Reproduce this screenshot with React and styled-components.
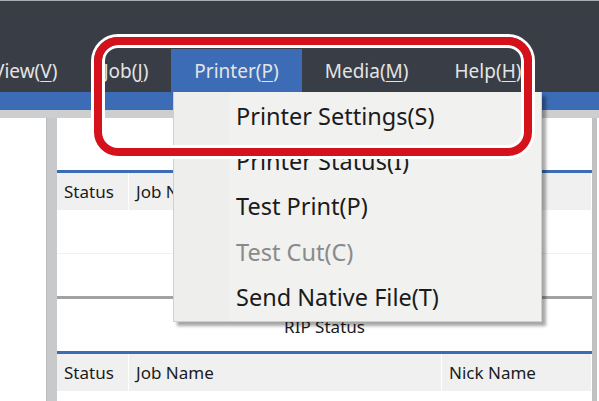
import React from "react";
import styled, { createGlobalStyle } from "styled-components";

const colors = {
  dark: "#393d45",
  blue: "#3b6cb5",
  red: "#d5111b",
  band: "#cdcecf",
  splitter: "#c7c9cb",
  menu: "#f1f1f0",
  gutter: "#eeeeed",
  header: "#f0f0f0",
  text: "#1b1b1b",
  disabled: "#8a8a8a",
};

const menus = [
  { label: "View", key: "V" },
  { label: "Job", key: "J" },
  { label: "Printer", key: "P", open: true },
  { label: "Media", key: "M" },
  { label: "Help", key: "H" },
];

const printerItems = [
  { label: "Printer Settings", key: "S" },
  { label: "Printer Status", key: "I" },
  { label: "Test Print", key: "P" },
  { label: "Test Cut", key: "C", disabled: true },
  { label: "Send Native File", key: "T" },
];

const GlobalStyle = createGlobalStyle`
  html, body {
    margin: 0;
    padding: 0;
    background: #ffffff;
  }
  body {
    font-family: "Noto Sans", "Open Sans", sans-serif;
  }
`;

const App = () => {
  return (
    <>
      <GlobalStyle />
      <Screen>
        <TitleArea />
        <MenuBar>
          {menus.map((m) => (
            <MenuItem key={m.label} open={m.open}>
              {m.label}(<u>{m.key}</u>)
            </MenuItem>
          ))}
        </MenuBar>
        <BlueStrip />
        <Workspace>
          <LeftPane />
          <Splitter />
          <MainPane>
            <PaneTitle>Job Status</PaneTitle>
            <BlueRule />
            <HeaderRow>
              <HeaderCell width="72px">Status</HeaderCell>
              <HeaderCell>Job Name</HeaderCell>
            </HeaderRow>
            <Row />
            <Row last />
            <GrayRule />
            <PaneTitle>RIP Status</PaneTitle>
            <BlueRule />
            <HeaderRow>
              <HeaderCell width="72px">Status</HeaderCell>
              <HeaderCell width="313px">Job Name</HeaderCell>
              <HeaderCell>Nick Name</HeaderCell>
            </HeaderRow>
          </MainPane>
          <EdgeBar />
          <EdgeStub />
        </Workspace>

        {/* open Printer menu */}
        <Dropdown>
          <Gutter />
          <ItemList>
            {printerItems.map((it) => (
              <DropItem key={it.label} disabled={it.disabled}>
                {it.label}({it.key})
              </DropItem>
            ))}
          </ItemList>
        </Dropdown>

        <Callout />
      </Screen>
    </>
  );
};
export default App;

const Screen = styled.div`
  position: relative;
  width: 599px;
  height: 401px;
  overflow: hidden;
  display: flex;
  flex-direction: column;
  background: #ffffff;
`;

const TitleArea = styled.div`
  height: 48px;
  background: ${colors.dark};
  border-top: 1px solid #a9acb1;
  flex-shrink: 0;
`;

const MenuBar = styled.div`
  display: flex;
  height: 43px;
  background: ${colors.dark};
  margin-left: -30px;
  flex-shrink: 0;
`;

const MenuItem = styled.div`
  display: flex;
  align-items: center;
  padding: 0 23px;
  font-size: 19px;
  color: #e4e4e4;
  background: ${(props) => (props.open ? colors.blue : "transparent")};
  white-space: nowrap;

  u {
    text-decoration-thickness: 1px;
    text-underline-offset: 3px;
  }
`;

const BlueStrip = styled.div`
  height: 18px;
  background: ${colors.blue};
  flex-shrink: 0;
`;

const Workspace = styled.div`
  flex: 1;
  display: flex;
  background: ${colors.band};
  padding-top: 8px;
`;

const LeftPane = styled.div`
  width: 46px;
  background: #ffffff;
`;

const Splitter = styled.div`
  width: 11px;
  background: ${colors.splitter};
  border-left: 1px solid #b9bbbe;
  box-sizing: border-box;
`;

const MainPane = styled.div`
  flex: 1;
  display: flex;
  flex-direction: column;
  background: #ffffff;
`;

const PaneTitle = styled.div`
  height: 52px;
  display: flex;
  align-items: center;
  justify-content: center;
  padding-top: 2px;
  box-sizing: border-box;
  font-size: 17px;
  color: ${colors.text};
`;

const BlueRule = styled.div`
  height: 3px;
  background: ${colors.blue};
`;

const HeaderRow = styled.div`
  display: flex;
  height: 37px;
  background: ${colors.header};
`;

const HeaderCell = styled.div`
  display: flex;
  align-items: center;
  width: ${(props) => props.width || "auto"};
  flex: ${(props) => (props.width ? "none" : 1)};
  padding-left: 7px;
  box-sizing: border-box;
  border-right: 1px solid #ffffff;
  font-size: 17px;
  color: ${colors.text};
  white-space: nowrap;
`;

const Row = styled.div`
  height: ${(props) => (props.last ? "42px" : "43px")};
  border-bottom: ${(props) => (props.last ? "none" : "1px solid #f0f0f0")};
`;

const GrayRule = styled.div`
  height: 3px;
  background: #a2a2a2;
`;

const EdgeBar = styled.div`
  width: 5px;
  background: #bfc1c3;
`;

const EdgeStub = styled.div`
  width: 2px;
  background: #ffffff;
`;

const Dropdown = styled.div`
  position: absolute;
  left: 173px;
  top: 92px;
  width: 369px;
  height: 230px;
  display: flex;
  background: ${colors.menu};
  border: 1px solid #cfcfcf;
  border-top: none;
  box-sizing: border-box;
  box-shadow: 4px 4px 3px rgba(0, 0, 0, 0.35);
`;

const Gutter = styled.div`
  width: 56px;
  background: ${colors.gutter};
`;

const ItemList = styled.div`
  flex: 1;
  display: flex;
  flex-direction: column;
  padding-top: 1px;
`;

const DropItem = styled.div`
  height: 45.4px;
  display: flex;
  align-items: center;
  padding-left: 6px;
  font-size: 23.5px;
  color: ${(props) => (props.disabled ? colors.disabled : colors.text)};
  white-space: nowrap;
`;

const Callout = styled.div`
  position: absolute;
  left: 94px;
  top: 37px;
  width: 438px;
  height: 119px;
  box-sizing: border-box;
  border: 8px solid ${colors.red};
  border-radius: 24px;
  box-shadow: 0 0 0 3px #ffffff, inset 0 0 0 3px #ffffff;
  pointer-events: none;
`;
